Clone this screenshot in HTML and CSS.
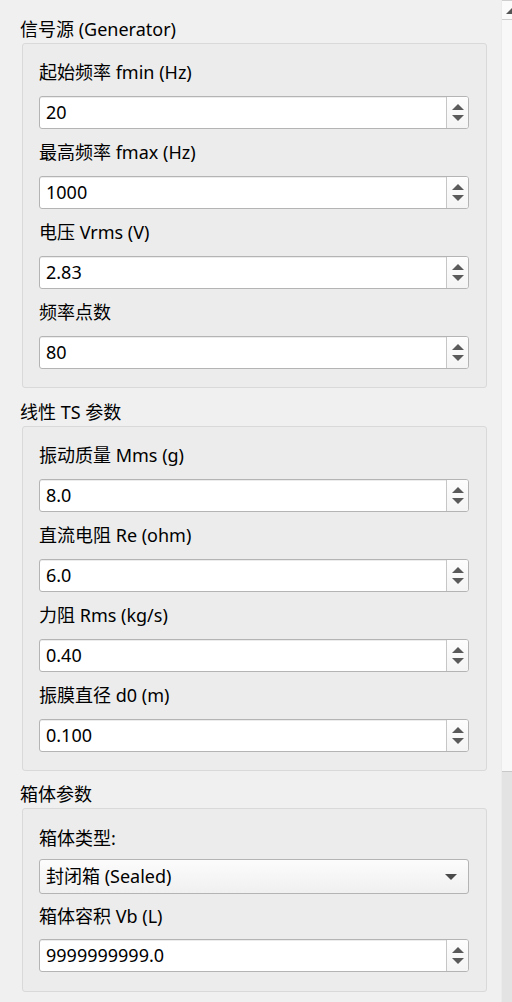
FILE: index.html
```html
<!DOCTYPE html>
<html lang="zh-CN">
<head>
<meta charset="utf-8">
<title>参数</title>
<link rel="stylesheet" href="styles.css">
</head>
<body>
<div class="page">
  <div class="content">
    <section class="group">
      <div class="group-title">信号源 (Generator)</div>
      <div class="group-box">
        <div class="field">
          <div class="label">起始频率 fmin (Hz)</div>
          <div class="spin"><div class="spin-value">20</div><div class="spin-btns"><span class="arrow-up"></span><span class="arrow-down"></span></div></div>
        </div>
        <div class="field">
          <div class="label">最高频率 fmax (Hz)</div>
          <div class="spin"><div class="spin-value">1000</div><div class="spin-btns"><span class="arrow-up"></span><span class="arrow-down"></span></div></div>
        </div>
        <div class="field">
          <div class="label">电压 Vrms (V)</div>
          <div class="spin"><div class="spin-value">2.83</div><div class="spin-btns"><span class="arrow-up"></span><span class="arrow-down"></span></div></div>
        </div>
        <div class="field">
          <div class="label">频率点数</div>
          <div class="spin"><div class="spin-value">80</div><div class="spin-btns"><span class="arrow-up"></span><span class="arrow-down"></span></div></div>
        </div>
      </div>
    </section>
    <section class="group">
      <div class="group-title">线性 TS 参数</div>
      <div class="group-box">
        <div class="field">
          <div class="label">振动质量 Mms (g)</div>
          <div class="spin"><div class="spin-value">8.0</div><div class="spin-btns"><span class="arrow-up"></span><span class="arrow-down"></span></div></div>
        </div>
        <div class="field">
          <div class="label">直流电阻 Re (ohm)</div>
          <div class="spin"><div class="spin-value">6.0</div><div class="spin-btns"><span class="arrow-up"></span><span class="arrow-down"></span></div></div>
        </div>
        <div class="field">
          <div class="label">力阻 Rms (kg/s)</div>
          <div class="spin"><div class="spin-value">0.40</div><div class="spin-btns"><span class="arrow-up"></span><span class="arrow-down"></span></div></div>
        </div>
        <div class="field">
          <div class="label">振膜直径 d0 (m)</div>
          <div class="spin"><div class="spin-value">0.100</div><div class="spin-btns"><span class="arrow-up"></span><span class="arrow-down"></span></div></div>
        </div>
      </div>
    </section>
    <section class="group group--last">
      <div class="group-title">箱体参数</div>
      <div class="group-box group-box--compact">
        <div class="field">
          <div class="label label--combo">箱体类型:</div>
          <div class="combo"><div class="combo-value">封闭箱 (Sealed)</div><span class="combo-arrow"></span></div>
        </div>
        <div class="field">
          <div class="label">箱体容积 Vb (L)</div>
          <div class="spin"><div class="spin-value">9999999999.0</div><div class="spin-btns"><span class="arrow-up"></span><span class="arrow-down"></span></div></div>
        </div>
      </div>
    </section>
  </div>
  <div class="scrollbar">
    <div class="sb-btn"><span class="sb-arrow"></span></div>
    <div class="sb-thumb"></div>
    <div class="sb-track"></div>
  </div>
</div>
</body>
</html>
```

FILE: styles.css
```css
html, body {
  margin: 0;
  padding: 0;
}
body {
  background: #f0f0f0;
  font-family: "Noto Sans", "Noto Sans CJK SC", sans-serif;
  font-size: 18px;
  color: #000;
}
.page {
  width: 512px;
  height: 1002px;
  display: flex;
  overflow: hidden;
}
.content {
  width: 501px;
  box-sizing: border-box;
  padding: 17px 14px 0 22px;
  display: flex;
  flex-direction: column;
  gap: 12px;
}
.group {
  display: flex;
  flex-direction: column;
  gap: 2px;
}
.group--last {
  margin-top: -1px;
}
.group-title {
  line-height: 24px;
  height: 24px;
  margin-left: -2px;
  white-space: nowrap;
}
.group-box {
  background: #ececec;
  border: 1px solid #d9d9d9;
  border-radius: 3px;
  padding: 16px 17px 18px 16px;
  display: flex;
  flex-direction: column;
  gap: 11px;
}
.group-box--compact {
  gap: 10px;
  padding-top: 17px;
  padding-bottom: 19px;
}
.field {
  display: flex;
  flex-direction: column;
}
.label {
  line-height: 24px;
  height: 24px;
  margin-bottom: 12px;
  white-space: nowrap;
}
.group-box--compact .label {
  margin-bottom: 11px;
}
.group-box--compact .label--combo {
  margin-bottom: 9px;
}
.spin {
  height: 33px;
  box-sizing: border-box;
  border: 1px solid #b4b4b4;
  border-radius: 3px;
  background: #fff;
  display: flex;
  box-shadow: inset 0 1px 0 #ececec;
}
.spin-value {
  flex: 1;
  padding-left: 6px;
  line-height: 31px;
  white-space: nowrap;
}
.spin-btns {
  width: 21px;
  border-left: 1px solid #c6c6c6;
  display: flex;
  flex-direction: column;
  align-items: center;
  justify-content: center;
  gap: 5px;
  background: linear-gradient(#fdfdfd, #f4f4f4);
  border-radius: 0 2px 2px 0;
}
.arrow-up {
  width: 0;
  height: 0;
  border-left: 6px solid transparent;
  border-right: 6px solid transparent;
  border-bottom: 6px solid #5a5a5a;
}
.arrow-down {
  width: 0;
  height: 0;
  border-left: 6px solid transparent;
  border-right: 6px solid transparent;
  border-top: 6px solid #5a5a5a;
}
.combo {
  height: 35px;
  box-sizing: border-box;
  border: 1px solid #b4b4b4;
  border-radius: 3px;
  background: linear-gradient(#fcfcfc, #f0f0f0);
  display: flex;
  align-items: center;
  padding: 0 11px 0 6px;
}
.combo-value {
  flex: 1;
  line-height: 33px;
  white-space: nowrap;
}
.combo-arrow {
  width: 0;
  height: 0;
  border-left: 6px solid transparent;
  border-right: 6px solid transparent;
  border-top: 6px solid #4a4a4a;
}
.scrollbar {
  width: 11px;
  display: flex;
  flex-direction: column;
  background: #e3e3e3;
  border-left: 1px solid #ebebeb;
  box-sizing: border-box;
}
.sb-btn {
  height: 20px;
  box-sizing: border-box;
  border-top: 1px solid #cfcfcf;
  border-bottom: 1px solid #cfcfcf;
  background: #fbfbfb;
  position: relative;
  overflow: hidden;
}
.sb-arrow {
  position: absolute;
  left: 4px;
  top: 7px;
  width: 0;
  height: 0;
  border-left: 6px solid transparent;
  border-right: 6px solid transparent;
  border-bottom: 6px solid #555;
}
.sb-thumb {
  height: 751px;
  background: #f8f8f8;
  border-bottom: 1px solid #c8c8c8;
}
.sb-track {
  flex: 1;
  background: #e3e3e3;
}
```
